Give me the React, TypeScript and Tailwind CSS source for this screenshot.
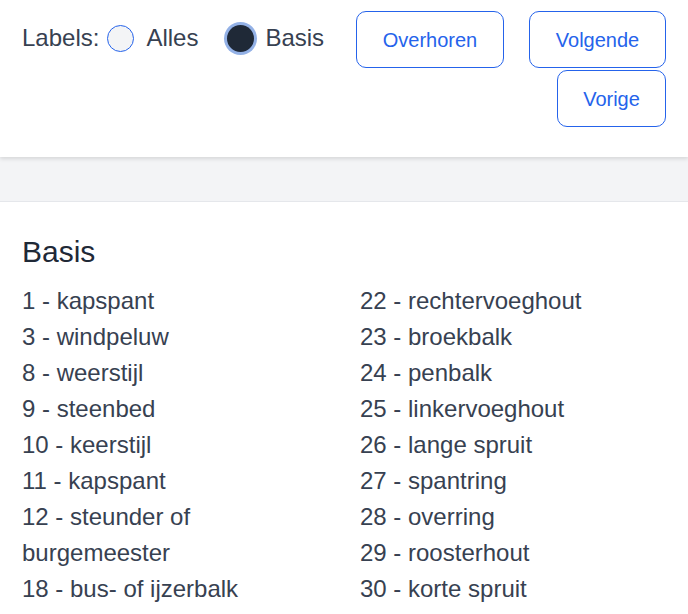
import React from "react";

const left = [
  "1 - kapspant",
  "3 - windpeluw",
  "8 - weerstijl",
  "9 - steenbed",
  "10 - keerstijl",
  "11 - kapspant",
  "12 - steunder of burgemeester",
  "18 - bus- of ijzerbalk",
];
const right = [
  "22 - rechtervoeghout",
  "23 - broekbalk",
  "24 - penbalk",
  "25 - linkervoeghout",
  "26 - lange spruit",
  "27 - spantring",
  "28 - overring",
  "29 - roosterhout",
  "30 - korte spruit",
];

export default function App() {
  return (
    <div className="min-h-screen bg-white text-[#374151]" style={{ fontFamily: '"Liberation Sans", Arial, sans-serif' }}>
      <header className="relative z-10 h-[157px] bg-white px-[22px] pt-[11px] shadow-[0_2px_4px_rgba(0,0,0,0.12)] flex items-start">
        <div className="flex items-center h-[54px] text-[24px] leading-[36px]">
          <span>Labels:</span>
          <label className="flex items-center ml-[8px]">
            <span className="block w-[27px] h-[27px] rounded-full border border-[#2563eb] bg-[#f3f4f6]" />
            <span className="ml-[12px]">Alles</span>
          </label>
          <label className="flex items-center ml-[29px]">
            <span className="block w-[27px] h-[27px] rounded-full bg-[#1f2937] ring-[3px] ring-[#93b1e6]" />
            <span className="ml-[11px]">Basis</span>
          </label>
        </div>
        <div className="ml-auto w-[310px] flex flex-wrap justify-end gap-x-[25px] gap-y-[2px]">
          <button className="w-[148px] h-[57px] rounded-[10px] border border-[#2563eb] text-[#2563eb] text-[20px] bg-white">Overhoren</button>
          <button className="w-[137px] h-[57px] rounded-[10px] border border-[#2563eb] text-[#2563eb] text-[20px] bg-white">Volgende</button>
          <button className="w-[109px] h-[57px] rounded-[10px] border border-[#2563eb] text-[#2563eb] text-[20px] bg-white">Vorige</button>
        </div>
      </header>
      <div className="h-[45px] bg-[#f3f4f6] border-b border-[#e5e7eb]" />
      <main className="px-[22px] pt-[32px]">
        <h2 className="text-[30px] leading-[36px] text-[#1f2937] mb-[13px]">Basis</h2>
        <div className="grid grid-cols-2 gap-x-[32px] text-[24px] leading-[36px]">
          <ul className="flex flex-col">
            {left.map((t) => (
              <li key={t}>{t}</li>
            ))}
          </ul>
          <ul className="flex flex-col">
            {right.map((t) => (
              <li key={t}>{t}</li>
            ))}
          </ul>
        </div>
      </main>
    </div>
  );
}
